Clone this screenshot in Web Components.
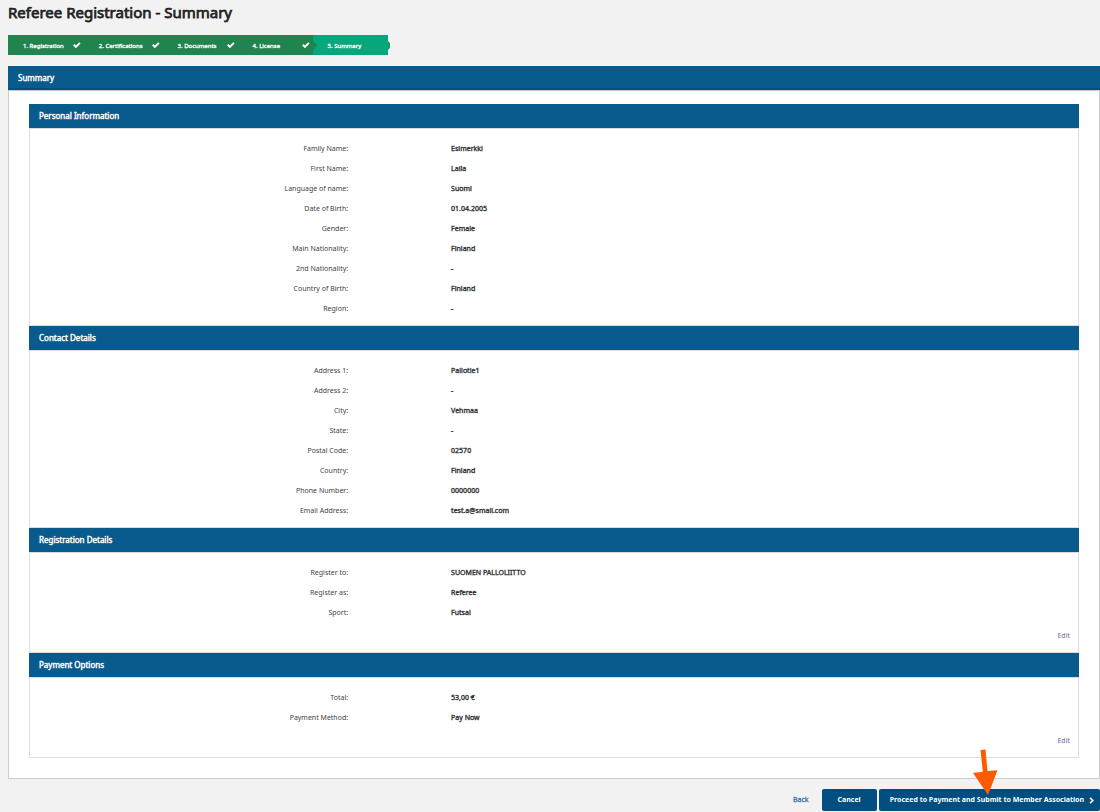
<!DOCTYPE html>
<html lang="en">
<head>
<meta charset="utf-8">
<title>Referee Registration - Summary</title>
<style>
body { margin: 0; background: #f2f2f2; color: #333; font-family: "Noto Sans", "Open Sans", sans-serif; font-size: 7px; line-height: 20px; }
</style>
</head>
<body>
<registration-page>
  <span slot="title">Referee Registration - Summary</span>
  <step-list slot="steps">
    <step-item state="done">1. Registration</step-item>
    <step-item state="done">2. Certifications</step-item>
    <step-item state="done">3. Documents</step-item>
    <step-item state="done">4. License</step-item>
    <step-item state="current">5. Summary</step-item>
  </step-list>
  <summary-panel>
    <span slot="heading">Summary</span>
    <detail-section>
      <span slot="heading">Personal Information</span>
      <detail-row label="Family Name:">Esimerkki</detail-row>
      <detail-row label="First Name:">Laila</detail-row>
      <detail-row label="Language of name:">Suomi</detail-row>
      <detail-row label="Date of Birth:">01.04.2005</detail-row>
      <detail-row label="Gender:">Female</detail-row>
      <detail-row label="Main Nationality:">Finland</detail-row>
      <detail-row label="2nd Nationality:">-</detail-row>
      <detail-row label="Country of Birth:">Finland</detail-row>
      <detail-row label="Region:">-</detail-row>
    </detail-section>
    <detail-section>
      <span slot="heading">Contact Details</span>
      <detail-row label="Address 1:">Pallotie1</detail-row>
      <detail-row label="Address 2:">-</detail-row>
      <detail-row label="City:">Vehmaa</detail-row>
      <detail-row label="State:">-</detail-row>
      <detail-row label="Postal Code:">02570</detail-row>
      <detail-row label="Country:">Finland</detail-row>
      <detail-row label="Phone Number:">0000000</detail-row>
      <detail-row label="Email Address:">test.a@smail.com</detail-row>
    </detail-section>
    <detail-section editable>
      <span slot="heading">Registration Details</span>
      <detail-row label="Register to:">SUOMEN PALLOLIITTO</detail-row>
      <detail-row label="Register as:">Referee</detail-row>
      <detail-row label="Sport:">Futsal</detail-row>
    </detail-section>
    <detail-section editable>
      <span slot="heading">Payment Options</span>
      <detail-row label="Total:">53,00 €</detail-row>
      <detail-row label="Payment Method:">Pay Now</detail-row>
    </detail-section>
  </summary-panel>
  <action-bar slot="actions"></action-bar>
</registration-page>

<script>
const define = (name, render) => customElements.define(name, class extends HTMLElement {
  constructor() {
    super();
    this.attachShadow({ mode: "open" });
  }
  connectedCallback() {
    this.shadowRoot.innerHTML = render(this);
  }
});

// Regular-width letters thickened by an outline that scales with the text.
const emphasis = "font-weight: 400; -webkit-text-stroke: 0.05em currentColor;";

define("registration-page", () => `
  <style>
    :host { display: block; padding: 1px 0 1px 8px; }
    h1 { margin: 0 0 12px; font-size: 15px; line-height: 22px; ${emphasis} color: #222; }
    main { margin: 11px 0 10px; }
  </style>
  <h1><slot name="title"></slot></h1>
  <slot name="steps"></slot>
  <main><slot></slot></main>
  <slot name="actions"></slot>
`);

define("step-list", () => `
  <style>
    :host { display: block; }
    nav { display: flex; }
  </style>
  <nav aria-label="Progress"><slot></slot></nav>
`);

define("step-item", el => `
  <style>
    :host {
      display: flex; align-items: center; justify-content: space-between; gap: 9px;
      position: relative; box-sizing: border-box; min-width: 75px; height: 20px;
      padding: 0 3px 0 15px; background: #1f844e; color: #fff;
      font-size: 6px; line-height: 20px; ${emphasis} white-space: nowrap;
    }
    :host([state="current"]) { background: #05a77b; border-right: 2px solid #fff; min-width: 77px; }
    span { padding-top: 1px; }
    .check { width: 8px; height: 7px; flex: none; }
    .notch { position: absolute; top: 6px; width: 4px; height: 9px; }
    .start { left: 0; }
    .end { right: -2px; width: 2px; }
  </style>
  <span><slot></slot></span>
  ${el.getAttribute("state") === "done"
    ? `<svg class="check" viewBox="0 0 8 7" aria-hidden="true"><path d="M.8 2.8 2.9 4.9 6.9 .9" fill="none" stroke="#fff" stroke-width="2"/></svg>`
    : `<svg class="notch start" viewBox="0 0 4 9" aria-hidden="true"><path d="M0 0 4 4.5 0 9Z" fill="#1f844e"/></svg>
       <svg class="notch end" viewBox="0 0 2 9" aria-hidden="true"><path d="M0 0 2 2V7L0 9Z" fill="#05a74f"/></svg>`}
`);

define("summary-panel", () => `
  <style>
    :host { display: block; }
    h2 { box-sizing: border-box; height: 24px; margin: 0; padding: 2px 10px 0; background: #085b8c; border-bottom: 2px solid #004f80; color: #fff; font-size: 8px; ${emphasis} line-height: 20px; }
    .body { padding: 13px 20px 20px; background: #fff; border: 1px solid #ccc; }
  </style>
  <h2><slot name="heading"></slot></h2>
  <div class="body"><slot></slot></div>
`);

define("detail-section", el => `
  <style>
    :host { display: block; }
    h3 { margin: 0; padding: 0 10px; background: #085b8c; color: #fff; font-size: 8px; ${emphasis} line-height: 24px; }
    .body { padding: 10px 0 6px; background: #fff; border: 1px solid #ddd; }
    .edit { display: flex; justify-content: flex-end; margin-top: 3px; padding: 0 8px; }
    a { color: #5f6f9a; text-decoration: none; }
  </style>
  <section>
    <h3><slot name="heading"></slot></h3>
    <div class="body">
      <slot></slot>
      ${el.hasAttribute("editable") ? `<div class="edit"><a href="#edit">Edit</a></div>` : ""}
    </div>
  </section>
`);

define("detail-row", el => `
  <style>
    :host { display: block; }
    dl { display: grid; grid-template-columns: 34fr 67fr; column-gap: 103px; margin: 0; }
    dt { text-align: right; color: #444; }
    dd { margin: 0; ${emphasis} color: #333; }
  </style>
  <dl><dt>${el.getAttribute("label")}</dt><dd><slot></slot></dd></dl>
`);

define("action-bar", () => `
  <style>
    :host { display: flex; justify-content: flex-end; align-items: center; gap: 2px; font-weight: 700; }
    a { margin-right: 11px; color: #4a78a8; ${emphasis} text-decoration: none; }
    button { display: flex; align-items: center; gap: 5px; height: 22px; margin: 0; padding: 0 16px; border: 0; border-radius: 2px; background: #004f80; color: #fff; font: inherit; white-space: nowrap; }
    .proceed { position: relative; }
    .proceed button { padding: 0 6px 0 11px; }
    .chevron { width: 5px; height: 7px; }
    .arrow { position: absolute; right: 102px; bottom: 16px; width: 26px; height: 46px; pointer-events: none; }
  </style>
  <a href="#back">Back</a>
  <button type="button">Cancel</button>
  <div class="proceed">
    <button type="submit">Proceed to Payment and Submit to Member Association
      <svg class="chevron" viewBox="0 0 5 7" aria-hidden="true"><path d="M1 .8 3.8 3.5 1 6.2" fill="none" stroke="#fff" stroke-width="1.6"/></svg>
    </button>
    <svg class="arrow" viewBox="0 0 26 46" aria-hidden="true"><path d="M8.5 1 13.5.5 15.5 22 25.5 21.2 16 46 1 24 10.8 22.8Z" fill="#ff5a00"/></svg>
  </div>
`);
</script>
</body>
</html>
